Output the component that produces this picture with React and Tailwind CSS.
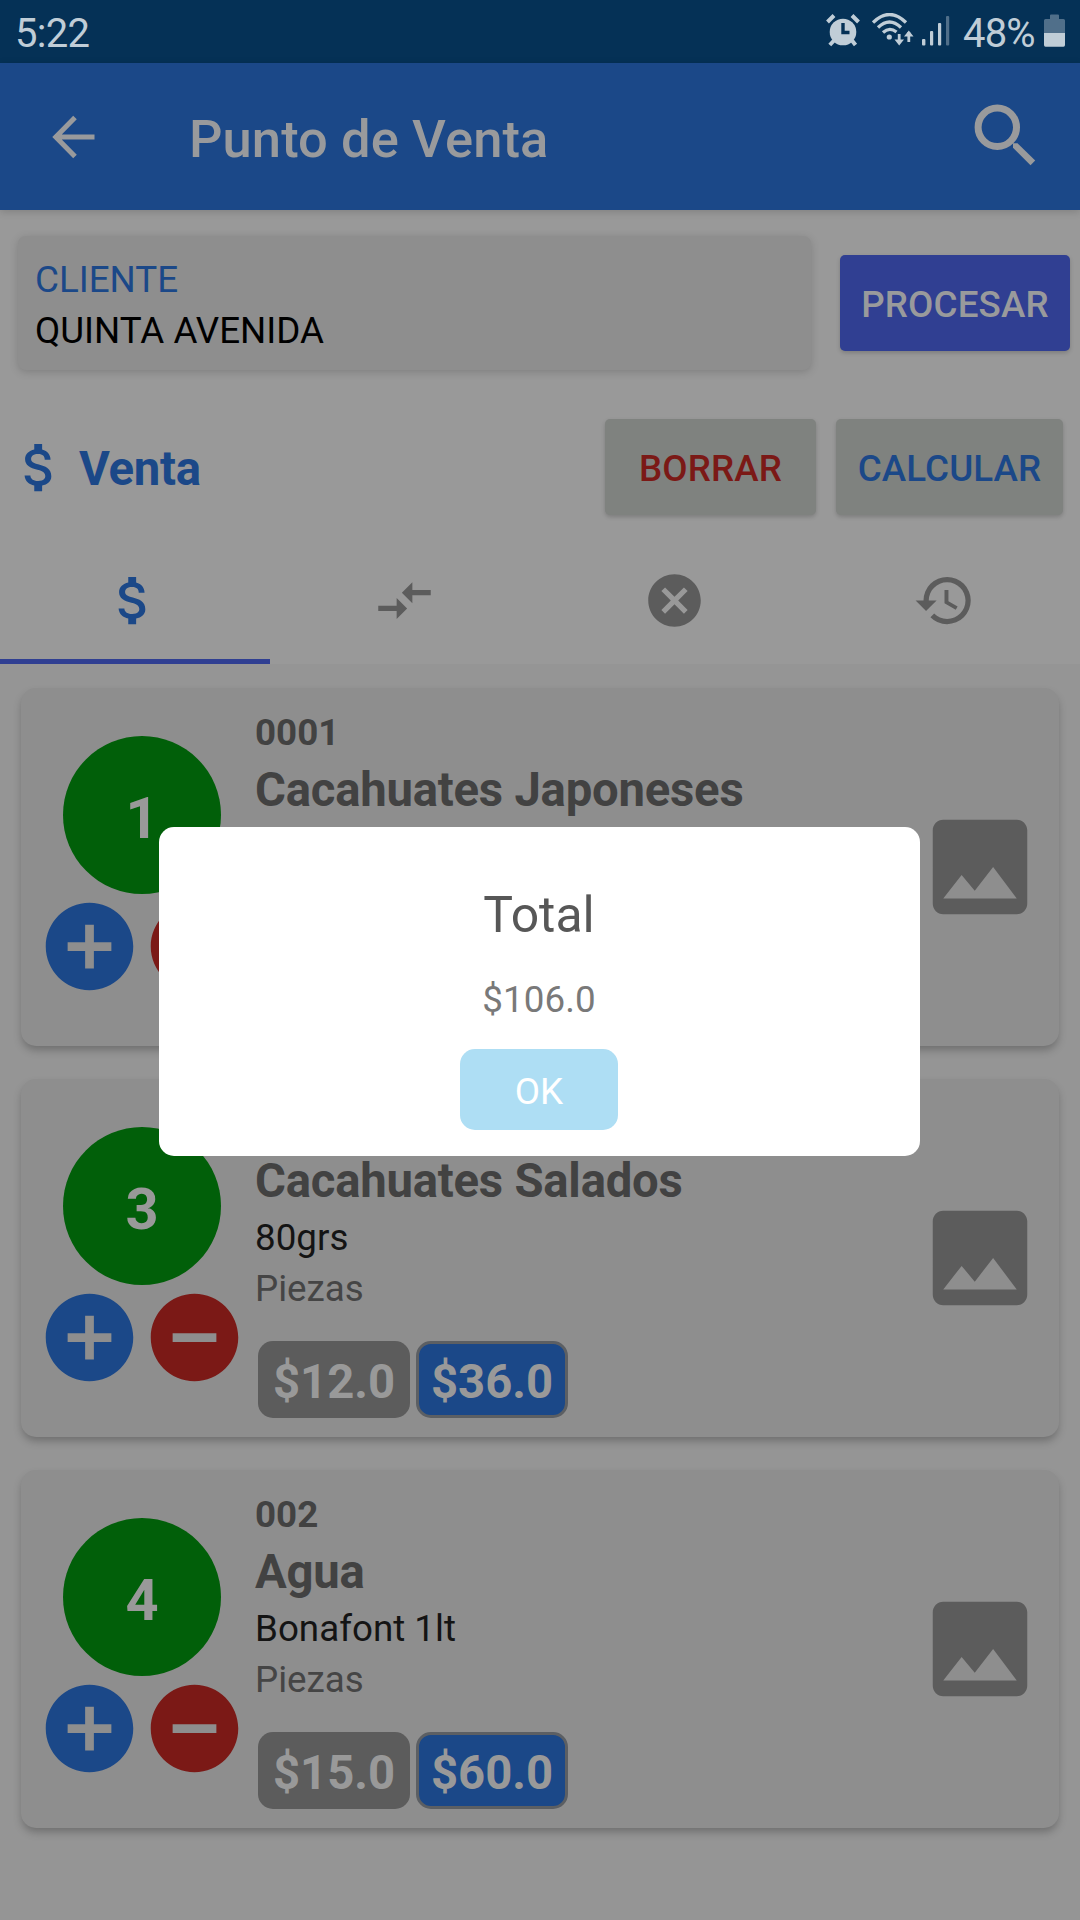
import React from "react";
import {
  MdAttachMoney,
  MdCompareArrows,
  MdCancel,
  MdHistory,
  MdImage,
  MdAddCircle,
  MdRemoveCircle,
} from "react-icons/md";

const products = [
  { qty: 1, code: "0001", name: "Cacahuates Japoneses" },
  { qty: 3, name: "Cacahuates Salados", detail: "80grs", unit: "Piezas", price: "$12.0", total: "$36.0" },
  { qty: 4, code: "002", name: "Agua", detail: "Bonafont 1lt", unit: "Piezas", price: "$15.0", total: "$60.0" },
];

function AlarmIcon() {
  return (
    <svg width="34" height="33" viewBox="0 0 34 33" fill="none">
      <circle cx="17" cy="18" r="13.3" fill="#c0cdd7" />
      <path d="M1.5 8 L8 1.5 M32.5 8 L26 1.5" stroke="#c0cdd7" strokeWidth="4" />
      <path d="M8 26.5 L3.8 31 M26 26.5 L29.5 31" stroke="#c0cdd7" strokeWidth="4" />
      <path d="M17 9 V18.5 H23.5" stroke="#053156" strokeWidth="3.4" />
    </svg>
  );
}

function WifiIcon() {
  return (
    <svg width="42" height="33" viewBox="0 0 42 33" fill="none" stroke="#c0cdd7">
      <path d="M1 9.5 Q17.5 -6.5 34 9.5" strokeWidth="3.3" />
      <path d="M6 14.5 Q17.5 3.5 29 14.5" strokeWidth="3.3" />
      <path d="M11 19.5 Q17.5 13.5 24.5 19" strokeWidth="3.3" />
      <circle cx="17.3" cy="24" r="2.6" fill="#c0cdd7" stroke="none" />
      <path d="M27.2 21 V30 M36.8 29 V19" strokeWidth="2.8" />
      <path d="M22.5 26.5 H32 L27.2 32.5 Z M32 23.5 H41.5 L36.8 17.5 Z" fill="#c0cdd7" stroke="none" />
    </svg>
  );
}

function SignalIcon() {
  return (
    <svg width="28" height="31" viewBox="0 0 28 31" fill="#c0cdd7">
      <rect x="0" y="24" width="3.4" height="6.5" rx="1" />
      <rect x="8" y="16" width="3.2" height="14.5" rx="1" />
      <rect x="16" y="8" width="3.2" height="22.5" rx="1" />
      <rect x="24" y="1" width="3.2" height="29.5" rx="1" fill="#506f8a" />
    </svg>
  );
}

function BatteryIcon() {
  return (
    <svg width="21" height="33" viewBox="0 0 21 33">
      <path d="M6 1.5 Q6 0.5 7 0.5 H14 Q15 0.5 15 1.5 V5 H19.5 Q21 5 21 6.5 V19 H0 V6.5 Q0 5 1.5 5 H6 Z" fill="#506f8a" />
      <path d="M0 19 H21 V31 Q21 32.7 19.5 32.7 H1.5 Q0 32.7 0 31 Z" fill="#c0cdd7" />
    </svg>
  );
}

function StatusBar() {
  return (
    <div className="flex h-[63px] items-start bg-[#053156] pl-[15px] text-[40px] leading-[67px] text-[#c0cdd7]">
      <span className="grow tracking-[-0.7px]">5:22</span>
      <div className="mt-[14px] flex items-start">
        <AlarmIcon />
        <div className="ml-[12px] -mt-px"><WifiIcon /></div>
        <div className="ml-[8px] mt-px"><SignalIcon /></div>
      </div>
      <span className="ml-[13px] w-[73px] tracking-[-0.8px]">48%</span>
      <div className="ml-[8px] mr-[15px] mt-[14px]"><BatteryIcon /></div>
    </div>
  );
}

function AppBar() {
  return (
    <header className="relative flex h-[147px] items-center bg-[#1b4888] pl-[52px] pr-[44px] shadow-[0_2px_8px_rgba(0,0,0,0.16)]">
      <svg width="44" height="44" viewBox="0 0 44 44" fill="none" stroke="#999a9c" strokeWidth="5">
        <path d="M23 2.5 L3.8 22 L23 41.5 M4 22 H42.5" />
      </svg>
      <h1 className="ml-[93px] grow pt-[4px] text-[52.5px] font-medium leading-[62px] tracking-[0.08px] text-[#999a9c]">Punto de Venta</h1>
      <svg className="-mt-[4px]" width="62" height="62" viewBox="0 0 62 62" fill="none">
        <circle cx="23.3" cy="23.3" r="19.2" stroke="#999a9c" strokeWidth="7" />
        <path d="M39 39.2 H43.5 L61.2 56.5 L56.5 61.2 L39 43.8 Z" fill="#999a9c" />
      </svg>
    </header>
  );
}

function Product({ item }) {
  return (
    <article className="flex h-[358px] rounded-[15px] bg-[#8e8e8e] pl-[16px] pr-[16px] shadow-[0_5px_8px_-1px_rgba(0,0,0,0.26)]">
      <div className="flex w-[210px] shrink-0 flex-col items-center pt-[48px]">
        <div className="flex size-[158px] items-center justify-center rounded-full bg-[#015f09] pt-[8px] text-[57.75px] font-bold leading-none text-[#999]">
          {item.qty}
        </div>
        <div className="flex">
          <MdAddCircle className="size-[105px] text-[#1b4888]" />
          <MdRemoveCircle className="size-[105px] text-[#7b1916]" />
        </div>
      </div>
      <div className="ml-[8px] grow pt-[20px] text-[36.75px]">
        <p className="h-[49px] font-bold leading-[49px] text-[#424242]">{item.code}</p>
        <p className="h-[66px] whitespace-nowrap text-[47.25px] font-bold leading-[66px] tracking-[-0.22px] text-[#424242]">{item.name}</p>
        <p className="h-[47px] leading-[47px] text-[#141414]">{item.detail}</p>
        <p className="h-[54px] leading-[56px] text-[#454545]">{item.unit}</p>
        {item.price && (
          <div className="ml-[3px] mt-[26px] flex gap-[6px] text-[47.25px] font-bold leading-[83px] text-[#999]">
            <span className="h-[77px] w-[152px] rounded-[15px] bg-[#5c5c5c] text-center">{item.price}</span>
            <span className="h-[77px] w-[152px] rounded-[15px] border-[3px] border-[#5c5f63] bg-[#1b4888] text-center leading-[77px]">{item.total}</span>
          </div>
        )}
      </div>
      <MdImage className="mt-[116px] size-[126px] shrink-0 text-[#5c5c5c]" />
    </article>
  );
}

function TotalDialog() {
  return (
    <div className="absolute left-[159px] top-[827px] flex h-[329px] w-[761px] flex-col items-center rounded-[15px] bg-white pr-px">
      <h2 className="mt-[58px] text-[49.9px] leading-[60px] text-[#575757]">Total</h2>
      <p className="mt-[30px] text-[36.75px] leading-[50px] tracking-[0.1px] text-[#797979]">$106.0</p>
      <button className="mt-[24px] h-[81px] w-[158px] rounded-[15px] bg-[#aedef4] pt-[5px] text-[36.75px] leading-none text-white">OK</button>
    </div>
  );
}

export default function App() {
  return (
    <div className="relative h-[1920px] w-[1080px] overflow-hidden bg-[#959595] font-['Roboto',sans-serif]">
      <StatusBar />
      <AppBar />
      <section className="h-[454px] bg-[#999]">
        <div className="flex items-start pl-[18px] pr-[10px] pt-[26px]">
          <div className="h-[134px] w-[793px] rounded-[8px] bg-[#8e8e8e] pl-[17px] pt-[18px] text-[36.75px] shadow-[0_2px_9px_rgba(0,0,0,0.17)]">
            <div className="leading-[51px] text-[#1b4888]">CLIENTE</div>
            <div className="leading-[51px] text-black">QUINTA AVENIDA</div>
          </div>
          <button className="ml-[29px] mt-[19px] h-[96px] w-[230px] rounded-[5px] bg-[#303f92] pt-[4px] text-[36.75px] font-medium leading-none tracking-[0.15px] text-[#999a9c] shadow-[0_2px_4px_rgba(0,0,0,0.18)]">
            PROCESAR
          </button>
        </div>
        <div className="mt-[49px] flex h-[96px] items-center pl-[8px] pr-[17px] text-[#1b4888]">
          <MdAttachMoney className="size-[63px]" />
          <h2 className="ml-[8px] grow pt-[3px] text-[47.25px] font-bold leading-[60px] tracking-[-0.3px]">Venta</h2>
          <button className="h-[96px] w-[211px] rounded-[5px] bg-[#7f827f] pt-[4px] text-[36.75px] font-medium leading-none tracking-[0.15px] text-[#7b1916] shadow-[0_2px_4px_rgba(0,0,0,0.18)]">
            BORRAR
          </button>
          <button className="ml-[20px] h-[96px] w-[227px] rounded-[5px] bg-[#7f827f] pt-[4px] text-[36.75px] font-medium leading-none tracking-[0.1px] shadow-[0_2px_4px_rgba(0,0,0,0.18)]">
            CALCULAR
          </button>
        </div>
        <nav className="mt-[22px] grid h-[127px] grid-cols-4 justify-items-center text-[#5c5c5c]">
          <div className="flex w-full items-start justify-center border-b-[5px] border-[#303f92] pr-[3px] pt-[32px] text-[#1b4888]">
            <MdAttachMoney className="size-[63px]" />
          </div>
          <MdCompareArrows className="mr-[2px] mt-[32px] size-[63px]" />
          <MdCancel className="mr-[2px] mt-[32px] size-[63px]" />
          <MdHistory className="mr-[2px] mt-[32px] size-[63px]" />
        </nav>
      </section>
      <main className="flex flex-col gap-[33px] px-[21px] pt-[24px]">
        {products.map((item) => (
          <Product key={item.name} item={item} />
        ))}
      </main>
      <TotalDialog />
    </div>
  );
}
